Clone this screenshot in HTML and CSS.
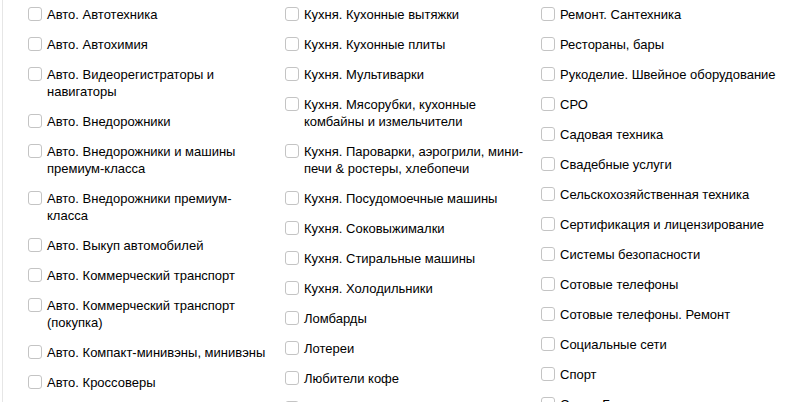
FILE: index.html
```html
<!DOCTYPE html>
<html lang="ru">
<head>
<meta charset="utf-8">
<link rel="stylesheet" href="styles.css">
</head>
<body>
<div class="panel">
  <div class="cols">
    <ul class="col">
      <li class="item"><span class="cb"></span><span class="lbl">Авто. Автотехника</span></li>
      <li class="item"><span class="cb"></span><span class="lbl">Авто. Автохимия</span></li>
      <li class="item"><span class="cb"></span><span class="lbl">Авто. Видеорегистраторы и навигаторы</span></li>
      <li class="item"><span class="cb"></span><span class="lbl">Авто. Внедорожники</span></li>
      <li class="item"><span class="cb"></span><span class="lbl">Авто. Внедорожники и машины премиум-класса</span></li>
      <li class="item"><span class="cb"></span><span class="lbl">Авто. Внедорожники премиум-класса</span></li>
      <li class="item"><span class="cb"></span><span class="lbl">Авто. Выкуп автомобилей</span></li>
      <li class="item"><span class="cb"></span><span class="lbl">Авто. Коммерческий транспорт</span></li>
      <li class="item"><span class="cb"></span><span class="lbl">Авто. Коммерческий транспорт (покупка)</span></li>
      <li class="item"><span class="cb"></span><span class="lbl">Авто. Компакт-минивэны, минивэны</span></li>
      <li class="item"><span class="cb"></span><span class="lbl">Авто. Кроссоверы</span></li>
    </ul>
    <ul class="col">
      <li class="item"><span class="cb"></span><span class="lbl">Кухня. Кухонные вытяжки</span></li>
      <li class="item"><span class="cb"></span><span class="lbl">Кухня. Кухонные плиты</span></li>
      <li class="item"><span class="cb"></span><span class="lbl">Кухня. Мультиварки</span></li>
      <li class="item"><span class="cb"></span><span class="lbl">Кухня. Мясорубки, кухонные комбайны и измельчители</span></li>
      <li class="item"><span class="cb"></span><span class="lbl">Кухня. Пароварки, аэрогрили, мини-печи &amp; ростеры, хлебопечи</span></li>
      <li class="item"><span class="cb"></span><span class="lbl">Кухня. Посудомоечные машины</span></li>
      <li class="item"><span class="cb"></span><span class="lbl">Кухня. Соковыжималки</span></li>
      <li class="item"><span class="cb"></span><span class="lbl">Кухня. Стиральные машины</span></li>
      <li class="item"><span class="cb"></span><span class="lbl">Кухня. Холодильники</span></li>
      <li class="item"><span class="cb"></span><span class="lbl">Ломбарды</span></li>
      <li class="item"><span class="cb"></span><span class="lbl">Лотереи</span></li>
      <li class="item"><span class="cb"></span><span class="lbl">Любители кофе</span></li>
      <li class="item"><span class="cb"></span><span class="lbl">Магазины</span></li>
    </ul>
    <ul class="col">
      <li class="item"><span class="cb"></span><span class="lbl">Ремонт. Сантехника</span></li>
      <li class="item"><span class="cb"></span><span class="lbl">Рестораны, бары</span></li>
      <li class="item"><span class="cb"></span><span class="lbl">Рукоделие. Швейное оборудование</span></li>
      <li class="item"><span class="cb"></span><span class="lbl">СРО</span></li>
      <li class="item"><span class="cb"></span><span class="lbl">Садовая техника</span></li>
      <li class="item"><span class="cb"></span><span class="lbl">Свадебные услуги</span></li>
      <li class="item"><span class="cb"></span><span class="lbl">Сельскохозяйственная техника</span></li>
      <li class="item"><span class="cb"></span><span class="lbl">Сертификация и лицензирование</span></li>
      <li class="item"><span class="cb"></span><span class="lbl">Системы безопасности</span></li>
      <li class="item"><span class="cb"></span><span class="lbl">Сотовые телефоны</span></li>
      <li class="item"><span class="cb"></span><span class="lbl">Сотовые телефоны. Ремонт</span></li>
      <li class="item"><span class="cb"></span><span class="lbl">Социальные сети</span></li>
      <li class="item"><span class="cb"></span><span class="lbl">Спорт</span></li>
      <li class="item"><span class="cb"></span><span class="lbl">Спорт. Бег</span></li>
    </ul>
  </div>
</div>
</body>
</html>
```

FILE: styles.css
```css
html, body {
  margin: 0;
  padding: 0;
  background: #fff;
  height: 402px;
  overflow: hidden;
}
.panel {
  position: relative;
  margin-left: 2px;
  border-left: 1px solid #e6e6e6;
  height: 402px;
  overflow: hidden;
  font-family: "Liberation Sans", Arial, sans-serif;
  font-size: 13px;
  line-height: 17px;
  color: #000;
}
.panel::before {
  content: "";
  position: absolute;
  left: -3px;
  top: 143px;
  width: 2px;
  height: 24px;
  background: #ffe8a0;
}
.cols {
  display: grid;
  grid-template-columns: 257px 256px 257px;
  padding-left: 25px;
  padding-top: 6px;
}
.col {
  list-style: none;
  margin: 0;
  padding: 0 15px 0 0;
  display: flex;
  flex-direction: column;
  gap: 13px;
}
.item {
  display: flex;
  align-items: flex-start;
  gap: 5px;
}
.cb {
  flex: none;
  box-sizing: border-box;
  width: 14px;
  height: 14px;
  margin-top: 1px;
  border: 1px solid #c4c4c4;
  border-radius: 3px;
  background: #fff;
}
.lbl {
  flex: 1;
}
```
